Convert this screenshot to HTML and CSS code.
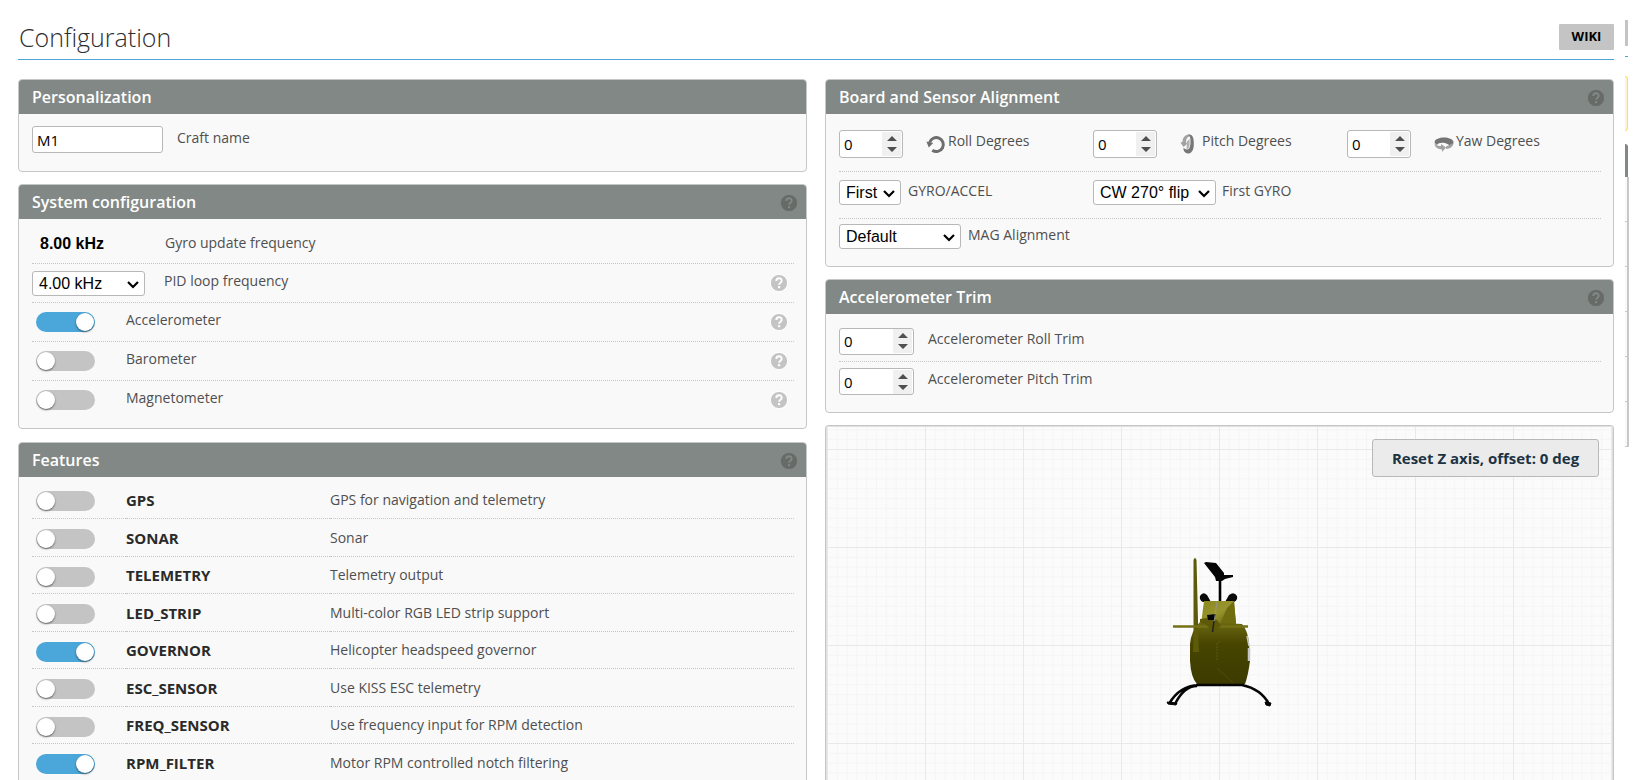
FILE: index.html
```html
<!DOCTYPE html>
<html lang="en">
<head>
<meta charset="utf-8">
<title>Configuration</title>
<link rel="stylesheet" href="styles.css">
</head>
<body>
<svg class="defs" aria-hidden="true">
  <symbol id="help" viewBox="0 0 18 18">
    <circle cx="9" cy="9" r="8.6" fill="currentColor"/>
    <path class="mark" d="M6.3 6.9C6.3 3.4 11.7 3.4 11.7 6.7C11.7 8.7 9.1 8.7 9.1 10.8" stroke-width="1.9"/>
    <rect class="dot" x="8" y="12.1" width="2.2" height="2.1"/>
  </symbol>
</svg>
<div class="page">
<main class="content">
  <header class="title-bar">
    <h1>Configuration</h1>
    <a class="wiki" href="#">WIKI</a>
  </header>
  <div class="columns">
    <div class="column">
      <section class="panel">
        <h2>Personalization</h2>
        <div class="body">
          <div class="row craft"><input class="field name" id="craft" type="text" value="M1"><label for="craft">Craft name</label></div>
        </div>
      </section>
      <section class="panel system">
        <h2>System configuration<svg class="help"><use href="#help"/></svg></h2>
        <div class="body">
          <div class="row"><output class="gyro" id="gyro">8.00 kHz</output><label for="gyro">Gyro update frequency</label></div>
          <div class="row"><select class="field pid" id="pid"><option>4.00 kHz</option></select><label for="pid">PID loop frequency</label><svg class="help"><use href="#help"/></svg></div>
          <div class="row"><input class="toggle" id="acc" type="checkbox" checked><label for="acc">Accelerometer</label><svg class="help"><use href="#help"/></svg></div>
          <div class="row"><input class="toggle" id="baro" type="checkbox"><label for="baro">Barometer</label><svg class="help"><use href="#help"/></svg></div>
          <div class="row"><input class="toggle" id="mag" type="checkbox"><label for="mag">Magnetometer</label><svg class="help"><use href="#help"/></svg></div>
        </div>
      </section>
      <section class="panel features">
        <h2>Features<svg class="help"><use href="#help"/></svg></h2>
        <div class="body">
          <table>
            <tr><td><input class="toggle" id="f1" type="checkbox"></td><th><label for="f1">GPS</label></th><td>GPS for navigation and telemetry</td></tr>
            <tr><td><input class="toggle" id="f2" type="checkbox"></td><th><label for="f2">SONAR</label></th><td>Sonar</td></tr>
            <tr><td><input class="toggle" id="f3" type="checkbox"></td><th><label for="f3">TELEMETRY</label></th><td>Telemetry output</td></tr>
            <tr><td><input class="toggle" id="f4" type="checkbox"></td><th><label for="f4">LED_STRIP</label></th><td>Multi-color RGB LED strip support</td></tr>
            <tr><td><input class="toggle" id="f5" type="checkbox" checked></td><th><label for="f5">GOVERNOR</label></th><td>Helicopter headspeed governor</td></tr>
            <tr><td><input class="toggle" id="f6" type="checkbox"></td><th><label for="f6">ESC_SENSOR</label></th><td>Use KISS ESC telemetry</td></tr>
            <tr><td><input class="toggle" id="f7" type="checkbox"></td><th><label for="f7">FREQ_SENSOR</label></th><td>Use frequency input for RPM detection</td></tr>
            <tr><td><input class="toggle" id="f8" type="checkbox" checked></td><th><label for="f8">RPM_FILTER</label></th><td>Motor RPM controlled notch filtering</td></tr>
          </table>
        </div>
      </section>
    </div>
    <div class="column">
      <section class="panel">
        <h2>Board and Sensor Alignment<svg class="help"><use href="#help"/></svg></h2>
        <div class="body align">
          <div class="thirds degrees">
            <div class="cell"><input class="field deg" id="roll" type="number" value="0">
              <svg class="axis" viewBox="0 0 20 20"><path d="M3.600 8.600A7 7 0 1 1 6.300 16.300" fill="none" stroke="#6e6e6e" stroke-width="3"/><path d="M.4 7.600L7.200 9L2.800 13.400Z" fill="#6e6e6e"/></svg>
              <label for="roll">Roll Degrees</label></div>
            <div class="cell"><input class="field deg" id="pitch" type="number" value="0">
              <svg class="axis" viewBox="0 0 20 20"><path d="M9 .5C4.600 1 2.500 4 2.500 8L.4 8.600L3.500 13L7.600 9.600L6 8.400C6 5 7 3 10 2Z" fill="#a2a2a2"/><path d="M8 .8C13 -.5 14 5 13.800 11C13.500 17 11 20 7.500 19.500C4.500 19 3.400 16.500 3.300 14L6.500 15.500C9.500 16 10.500 12 10.500 8C10.500 4 10 2 8 .8Z" fill="#777"/><path d="M6.500 15.500C9.500 15 10 10 9.500 5L7 7.500Z" fill="#b0b0b0"/></svg>
              <label for="pitch">Pitch Degrees</label></div>
            <div class="cell"><input class="field deg" id="yaw" type="number" value="0">
              <svg class="axis" viewBox="0 0 20 20"><path d="M.5 8C1.500 2 18.500 2 19.500 8C19.500 10 18 12 16 13C16 9 5 7 3 11C1.500 10 1 9 .5 8Z" fill="#747474"/><path d="M.5 8.500C2 12 5 12 7 12L7 10L12 13.500L8 18L8 15.500C3 15 .5 13 .5 8.500ZM12 12.500L19.500 9C19.500 12 16 15 12 15Z" fill="#a2a2a2"/></svg>
              <label for="yaw">Yaw Degrees</label></div>
          </div>
          <div class="thirds sensors">
            <div class="cell"><select class="field first" id="ga"><option>First</option></select><label for="ga">GYRO/ACCEL</label></div>
            <div class="cell"><select class="field flip" id="fg"><option>CW 270° flip</option></select><label for="fg">First GYRO</label></div>
          </div>
          <div class="cell mag"><select class="field magsel" id="ma"><option>Default</option></select><label for="ma">MAG Alignment</label></div>
        </div>
      </section>
      <section class="panel">
        <h2>Accelerometer Trim<svg class="help"><use href="#help"/></svg></h2>
        <div class="body trim">
          <div class="row"><input class="field trimval" id="tr" type="number" value="0"><label for="tr">Accelerometer Roll Trim</label></div>
          <div class="row"><input class="field trimval" id="tp" type="number" value="0"><label for="tp">Accelerometer Pitch Trim</label></div>
        </div>
      </section>
      <section class="panel preview">
        <svg class="grid" aria-hidden="true">
          <defs><pattern id="cells" width="98" height="98" patternUnits="userSpaceOnUse" x="0" y="22">
            <path d="M10.300 0V98M20.100 0V98M29.900 0V98M39.700 0V98M49.500 0V98M59.300 0V98M69.100 0V98M78.900 0V98M88.700 0V98M0 10.300H98M0 20.100H98M0 29.900H98M0 39.700H98M0 49.500H98M0 59.300H98M0 69.100H98M0 78.900H98M0 88.700H98" stroke="#f5f5f5"/>
            <path d="M.5 0V98M0 .5H98" stroke="#e9e9e9"/>
          </pattern></defs>
          <rect width="100%" height="100%" fill="url(#cells)"/>
        </svg>
        <svg class="heli" viewBox="0 0 140 180" role="img" aria-label="Helicopter model">
          <defs><linearGradient id="hull" x1="0" y1="0" x2="0" y2="1"><stop offset="0" stop-color="#6b6812"/><stop offset=".35" stop-color="#474500"/><stop offset="1" stop-color="#3d3b00"/></linearGradient>
          <linearGradient id="nose" x1="0" y1="0" x2="1" y2="1"><stop offset="0" stop-color="#8a871f"/><stop offset=".5" stop-color="#98952f"/><stop offset="1" stop-color="#5d5a0c"/></linearGradient></defs>
          <path d="M70 39V61" stroke="#000" stroke-width="2.600"/>
          <path d="M54 23L56 22L66 23L74 33L74 35L83 35V37L75 39L72 41H66L65 37Z" fill="#050505"/>
          <path d="M50 56Q53 51 57 55L61 62H53Q49 60 50 56ZM87 56Q84 51 79 55L75 62H84Q88 60 87 56Z" fill="#0a0a0a"/>
          <path d="M54 61H84L86 84H51Z" fill="url(#nose)"/>
          <path d="M84 61L86 84H70L77 68Z" fill="#6f6c10"/>
          <path d="M50 82L92 84Q98 91 99 103L100 121Q98 136 95 144H47Q41 138 40 121V104Q41 91 50 82Z" fill="url(#hull)"/>
          <path d="M97 96L99 106" fill="none" stroke="#c5c5c5" stroke-width="1.500"/><path d="M99 108V121" stroke="#c5c5c5" stroke-width="2.500"/>
          <path d="M67 120V103L71 101M67 128L83 143" fill="none" stroke="#66621b" stroke-width=".7" stroke-dasharray="2 1"/>
          <path d="M43.500 20Q45 16 46.500 20L48.500 100L49 112H43L43.500 92Z" fill="#5d5a08"/>
          <path d="M23 86.500H98" stroke="#747117" stroke-width="2.400"/>
          <path d="M50 79L57 78L67 80L71 86L64 92L56 85L50 82Z" fill="#5d5908"/>
          <path d="M57 75L66 74L64 80H58Z" fill="#050505"/><path d="M67 62L64 82" stroke="#999" stroke-width=".8"/><path d="M64 81L62.500 92" stroke="#222" stroke-width="1.500"/>
          <path d="M46 145H94M49 145Q29 146 19 164M47 146Q34 146 25 164M92 145Q111 149 119 164" fill="none" stroke="#050505" stroke-width="2.600"/>
          <path d="M17 162L27 163L26 165L18 164ZM115 162L121 163L120 166L116 165Z" fill="#050505" stroke="#050505"/>
        </svg>
        <button class="reset" type="button">Reset Z axis, offset: 0 deg</button>
      </section>
    </div>
  </div>
</main>
<aside class="edge" aria-hidden="true">
  <div class="edge-button"></div><div class="edge-rule"></div><div class="edge-note"></div><div class="edge-head"></div>
  <div class="edge-line"></div><div class="edge-line"></div><div class="edge-line"></div><div class="edge-line"></div><div class="edge-line"></div><div class="edge-line"></div>
</aside>
</div>
</body>
</html>
```
FILE: styles.css
```css
* { box-sizing: border-box; }
body { margin: 0; background: #fff; color: #4f4f4f; font: 14px/20px "Open Sans", sans-serif; }
.defs { display: none; }
.page { display: flex; height: 100vh; overflow: hidden; padding-right: 16px; }
.content { flex: 1; display: flex; flex-direction: column; min-width: 0; padding: 14px 11px 0 18px; }
.title-bar { flex: none; display: flex; justify-content: space-between; align-items: center; height: 46px; border-bottom: 1px solid #4ba6d9; }
h1 { margin: 0; padding-left: 1px; font-size: 25px; line-height: 36px; font-weight: 300; color: #2e2e2e; }
.wiki { width: 55px; height: 26px; background: #c4c4c4; color: #000; font-size: 13px; line-height: 24px; font-weight: 700; text-align: center; text-decoration: none; border-radius: 1px; }
.columns { flex: 1; display: grid; grid-template-columns: 1fr 1fr; gap: 18px; min-height: 0; padding-top: 19px; }
.column { display: flex; flex-direction: column; gap: 12px; min-width: 0; }
.panel { border: 1px solid #c5c7c6; border-radius: 4px; background: #f9f9f9; overflow: hidden; flex: none; }
.panel h2 { display: flex; align-items: center; justify-content: space-between; margin: 0; height: 34px; padding: 0 8px 0 13px; background: #828885; color: #fff; font-size: 16px; line-height: 32px; font-weight: 600; }
.body { padding: 7px 12px 20px 13px; }
.row { display: flex; align-items: center; }
.row + .row { border-top: 1px dotted #c5c7c6; }
label { padding-bottom: 4px; }
th label { padding: 0; }
.craft { height: 29px; margin-top: 1px; padding-top: 6px; }
.help { width: 18px; height: 18px; flex: none; color: #c4c4c4; margin-left: auto; margin-right: 6px; fill: #fff; stroke: #fff; }
h2 .help { color: #666b68; margin-right: 0; margin-top: 2px; fill: #828885; stroke: #828885; }
.mark { fill: none; }
.dot { stroke: none; }
.field { margin: 0; border: 1px solid #b8b8b8; border-radius: 3px; background: #fff; color: #000; font: 16px "Liberation Sans", sans-serif; }
input.field { font-family: "Open Sans", sans-serif; font-size: 15px; padding: 1px 1px 1px 4px; }
select.field { appearance: none; height: 25px; padding: 0 18px 0 6px; background: #fff url("data:image/svg+xml,%3Csvg xmlns='http://www.w3.org/2000/svg' width='12' height='8'%3E%3Cpath d='M1 1L6 6L11 1' fill='none' stroke='%23000' stroke-width='2.2'/%3E%3C/svg%3E") no-repeat right 5px top 9px; }
.name { width: 131px; height: 27px; margin-right: 14px; }
.system .row { height: 39px; }
.system .body { padding-top: 5px; padding-bottom: 9px; }
.gyro { width: 125px; padding-left: 8px; color: #000; font: 700 16px "Liberation Sans", sans-serif; }
.gyro + label { margin-left: 8px; padding-bottom: 2px; }
.pid { width: 113px; margin-right: 19px; }
.toggle { appearance: none; display: block; flex: none; width: 59px; height: 20px; margin: 0 31px 0 4px; border-radius: 10px; background: #c4c4c4; }
.toggle::before { content: ""; display: block; width: 18px; height: 18px; margin: 1px; border-radius: 50%; background: #fff; box-shadow: 0 1px 2px #0008; }
.toggle:checked { background: #4ba6d9; }
.toggle:checked::before { margin-left: 40px; }
.features { margin-top: 1px; }
.features .body { padding-top: 4px; }
table { width: 100%; border-collapse: separate; border-spacing: 0; }
td, th { height: 37px; padding: 0; border-top: 1px dotted #c5c7c6; text-align: left; }
tr:nth-child(even) > * { height: 38px; }
tr:first-child > * { border-top: 0; }
td:first-child { width: 94px; }
td:first-child .toggle { margin-top: 3px; }
th { width: 204px; color: #2a2a2a; font-size: 15px; font-weight: 700; }
.thirds { display: grid; grid-template-columns: repeat(3, 1fr); border-bottom: 1px dotted #c5c7c6; }
.cell { display: flex; align-items: center; }
.degrees { height: 51px; padding-bottom: 4px; }
.degrees label { padding-bottom: 7px; }
.trim label { padding-bottom: 5px; }
.deg { width: 64px; height: 28px; margin-right: 23px; }
.deg, .trimval { flex: none; }
.axis { width: 20px; height: 20px; margin-right: 2px; }
.sensors { height: 47px; padding-bottom: 5px; }
.first { width: 62px; margin-right: 7px; }
.flip { width: 123px; margin-right: 6px; }
.magsel { width: 122px; margin-right: 7px; }
.mag { height: 35px; }
.align { padding-bottom: 12px; }
.trim .row { height: 40px; }
.trim { padding-top: 7px; padding-bottom: 11px; }
.trimval { width: 75px; height: 27px; margin-right: 14px; }
.preview { position: relative; flex: 1; min-height: 355px; border-bottom: 0; border-radius: 4px 4px 0 0; background: #fbfbfb; }
.grid { display: block; position: absolute; inset: 0; width: 100%; height: 100%; border: 1px solid #e0e0e0; border-bottom: 0; }
.heli { position: absolute; width: 140px; height: 180px; left: calc(50% - 70px); top: 114px; }
.reset { position: absolute; top: 13px; right: 14px; width: 227px; height: 38px; border: 1px solid #b8b8b8; border-radius: 3px; background: #ebebeb; color: #1c3344; font: 700 15px "Open Sans", sans-serif; }
input[type="number"]::-webkit-inner-spin-button { appearance: none; opacity: 1; width: 19px; height: 24px; background: #f0f0f0 url("data:image/svg+xml,%3Csvg xmlns='http://www.w3.org/2000/svg' width='10' height='16'%3E%3Cpath d='M0 5L5 0L10 5ZM0 11L5 16L10 11Z' fill='%234f4f4f'/%3E%3C/svg%3E") no-repeat center; }
.edge { width: 4px; padding-top: 20px; }
.edge-button { width: 3px; height: 26px; background: #c4c4c4; }
.edge-rule { width: 3px; height: 1px; margin-top: 10px; background: #4ba6d9; }
.edge-note { width: 3px; height: 55px; margin-top: 19px; border: 1px solid #ffe055; border-left: 0; border-radius: 0 4px 4px 0; background: #fff5d0; }
.edge-head { width: 3px; height: 33px; margin-top: 13px; border-radius: 0 3px 0 0; background: #828885; }
.edge-line { height: 45px; border-right: 2px solid #c8c8c8; border-bottom: 1px solid #c8c8c8; background: #f9f9f9; }
```
